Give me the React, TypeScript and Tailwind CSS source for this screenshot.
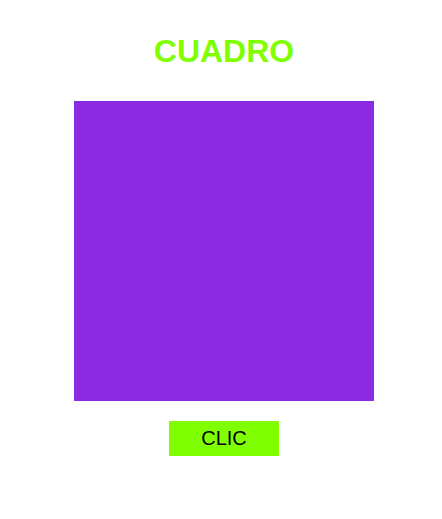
import React from "react";

const App = () => {
  return (
    <div className="min-h-screen w-full bg-white pl-[6px] font-['Liberation_Sans',Arial,sans-serif]">
      <div className="flex flex-col items-center pt-[33px]">
        <h1 className="text-[32px] leading-[37px] font-bold text-[#7fff00]">CUADRO</h1>
        <div className="mt-[31px] w-[300px] h-[300px] bg-[#8a2be2]" />
        <button className="mt-[20px] w-[110px] h-[35px] bg-[#7fff00] text-[20px] leading-[23px] text-black">
          CLIC
        </button>
      </div>
    </div>
  );
};

export default App;
